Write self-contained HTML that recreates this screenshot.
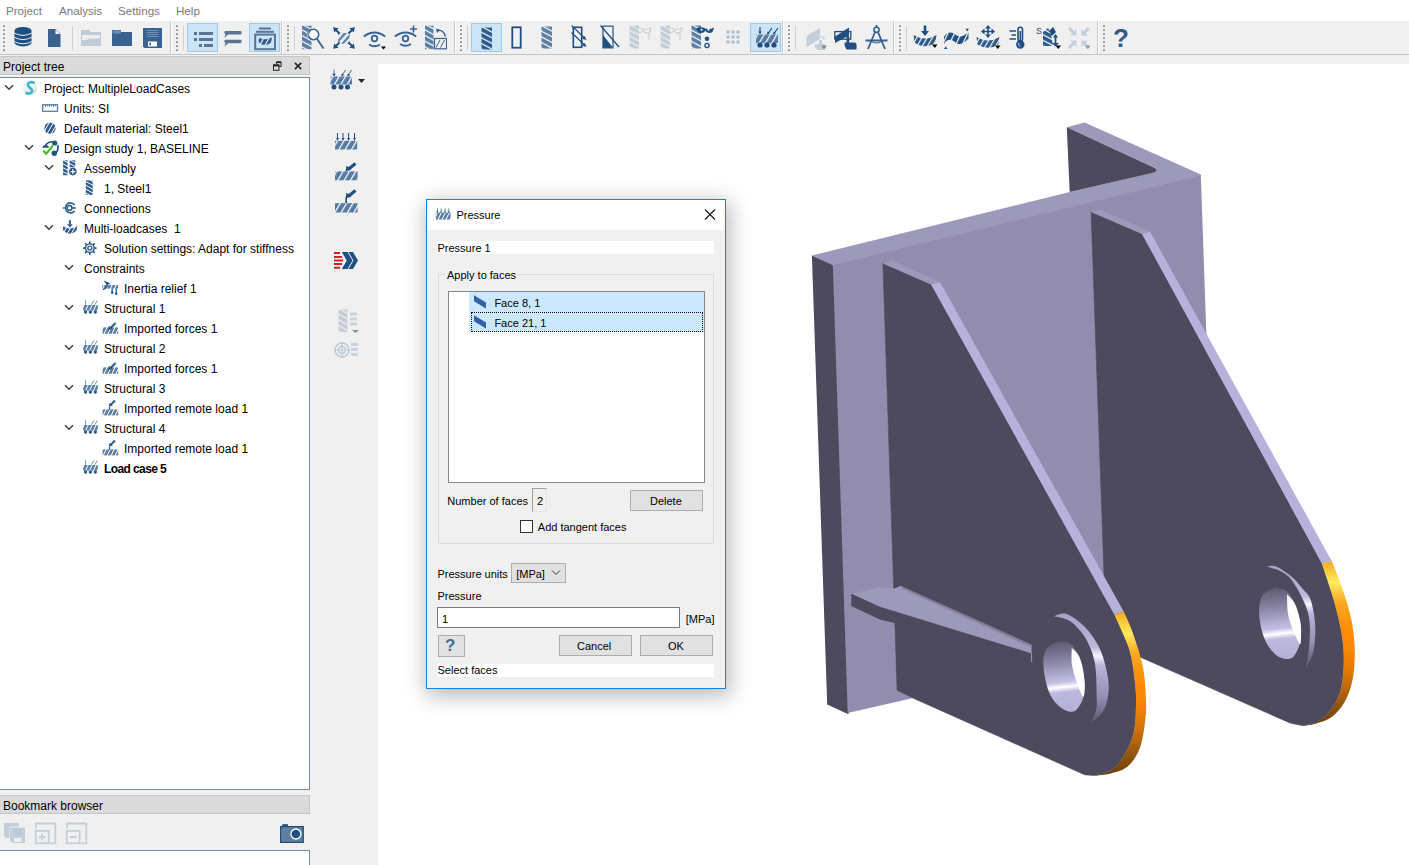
<!DOCTYPE html>
<html><head><meta charset="utf-8">
<style>
*{margin:0;padding:0;box-sizing:border-box}
html,body{width:1409px;height:865px;overflow:hidden;background:#f0f0f0;font-family:"Liberation Sans",sans-serif;font-size:12px;color:#000}
.a{position:absolute}
.t{position:absolute;white-space:nowrap;line-height:14px}
#menu{left:0;top:0;width:1409px;height:21px;background:#fff}
#menu .t{top:4px;color:#7a7a7a;font-size:11.6px}
#tb{left:0;top:21px;width:1409px;height:34px;background:#f0f0f0;border-bottom:1px solid #c6c6c6}
.grip{position:absolute;top:4px;width:3px;height:26px;background:repeating-linear-gradient(to bottom,#9a9a9a 0 1px,transparent 1px 4px)}
.sep{position:absolute;top:5px;width:1px;height:24px;background:#cfcfcf}
.tbend{position:absolute;top:0;width:2px;height:33px;border-left:1px solid #c9c9c9;border-right:1px solid #fff}
.chk{position:absolute;top:2px;width:31px;height:29px;background:#cce4f7;border:1px solid #99d1ff}
.dockhdr{position:absolute;left:0;width:310px;height:19px;background:#dadada;border:1px solid #c6c6c6;border-left:none}
.tree{position:absolute;left:0;width:310px;background:#fff;border:1px solid #7a8699;border-left:none}
.row{position:absolute;height:20px;line-height:20px;white-space:nowrap}
.chev{position:absolute;width:7px;height:7px;border-right:1.6px solid #404040;border-bottom:1.6px solid #404040;transform:rotate(45deg)}
#vp{left:378px;top:64px;width:1031px;height:801px;background:#fff}
.dlg{position:absolute;left:426px;top:199px;width:300px;height:490px;background:#f0f0f0;border:1px solid #1883d7;box-shadow:0 0 10px rgba(0,0,0,0.25)}
.btn{position:absolute;background:#e1e1e1;border:1px solid #adadad;text-align:center;line-height:18px}
</style></head><body>
<svg width="0" height="0" style="position:absolute">
<defs>
<pattern id="st" width="5" height="5" patternUnits="userSpaceOnUse" patternTransform="rotate(-62)"><rect width="5" height="5" fill="#2d5b8d"/><rect width="1.2" height="5" fill="#fff"/></pattern>
<pattern id="st2" width="4.5" height="4.5" patternUnits="userSpaceOnUse" patternTransform="rotate(30)"><rect width="4.5" height="4.5" fill="#2d5b8d"/><rect width="1.1" height="4.5" fill="#fff"/></pattern>
<pattern id="stl" width="5" height="5" patternUnits="userSpaceOnUse" patternTransform="rotate(-62)"><rect width="5" height="5" fill="#5c7ea4"/><rect width="1.2" height="5" fill="#fff"/></pattern>
<pattern id="stl2" width="5.5" height="5.5" patternUnits="userSpaceOnUse" patternTransform="rotate(30)"><rect width="5.5" height="5.5" fill="#587ba3"/><rect width="1.2" height="5.5" fill="#fff"/></pattern>
<pattern id="stl3" width="3.6" height="3.6" patternUnits="userSpaceOnUse" patternTransform="rotate(25)"><rect width="3.6" height="3.6" fill="#587ba3"/><rect width="1" height="3.6" fill="#fff"/></pattern>
<pattern id="st3" width="3.4" height="3.4" patternUnits="userSpaceOnUse" patternTransform="rotate(-62)"><rect width="3.4" height="3.4" fill="#2d5b8d"/><rect width="0.9" height="3.4" fill="#fff"/></pattern>
<pattern id="st4" width="3.6" height="3.6" patternUnits="userSpaceOnUse" patternTransform="rotate(30)"><rect width="3.6" height="3.6" fill="#2d5b8d"/><rect width="0.9" height="3.6" fill="#fff"/></pattern>
<pattern id="st5" width="6" height="6" patternUnits="userSpaceOnUse" patternTransform="rotate(25)"><rect width="6" height="6" fill="#1f4e80"/><rect width="1.2" height="6" fill="#fff"/></pattern>
<pattern id="stg" width="5" height="5" patternUnits="userSpaceOnUse" patternTransform="rotate(-62)"><rect width="5" height="5" fill="#c3ccd6"/><rect width="1.2" height="5" fill="#f0f0f0"/></pattern>
<radialGradient id="sball" cx="0.4" cy="0.35" r="0.7"><stop offset="0" stop-color="#ffffff"/><stop offset="0.7" stop-color="#e8ecef"/><stop offset="1" stop-color="#c7cfd4"/></radialGradient>
<symbol id="i-S" viewBox="0 0 18 16"><circle cx="7" cy="8" r="7" fill="url(#sball)"/><path d="M10.8 2.6 C7.5 1.2 4 3 5 5.6 C6 8 9.4 8.2 9 11 C8.6 13.4 5.6 14 3.6 13.2" fill="none" stroke="#38b4cc" stroke-width="2.6" stroke-linecap="round"/></symbol>
<symbol id="i-ruler" viewBox="0 0 18 16"><rect x="0.7" y="4.7" width="14.8" height="6.6" fill="none" stroke="#5a80a8" stroke-width="1.3"/><path d="M3.5 5v2M5.5 5v1.4M7.5 5v2M9.5 5v1.4M11.5 5v2M13.5 5v1.4" stroke="#5a80a8" stroke-width="1"/></symbol>
<symbol id="i-mat" viewBox="0 0 18 16"><circle cx="8" cy="8.2" r="5.6" fill="url(#st4)"/></symbol>
<symbol id="i-design" viewBox="0 0 18 16"><path d="M3.5 5.5 C5 2.5 9 1 13 2.2 M15.8 5 C16.5 8 16 11 13.5 13.5" fill="none" stroke="#245487" stroke-width="1.7"/><circle cx="12.7" cy="3" r="2.6" fill="#245487"/><circle cx="12.3" cy="13.2" r="2.7" fill="#245487"/><path d="M0.3 7.8 A3.4 3.4 0 0 1 7 7.8Z" fill="#245487"/><path d="M0.5 11.2 L1.8 9.8 L4.2 12 L10.5 4.2 L11.2 7 L4.2 15.6Z" fill="#40c126"/></symbol>
<symbol id="i-asm" viewBox="0 0 18 16"><rect x="1" y="0.3" width="4.6" height="15" fill="url(#st3)"/><rect x="7.6" y="0.3" width="5.6" height="7" fill="url(#st3)"/><circle cx="10.8" cy="11.6" r="3.8" fill="#2d5b8d"/><path d="M10.8 9.2v4.8M8.4 11.6h4.8" stroke="#fff" stroke-width="1.2"/></symbol>
<symbol id="i-part" viewBox="0 0 18 16"><rect x="3.8" y="0.3" width="6.9" height="14.6" fill="url(#st3)"/></symbol>
<symbol id="i-conn" viewBox="0 0 18 16"><path d="M12.6 5 A5 5 0 1 0 12.6 10.8" fill="none" stroke="#2d5b8d" stroke-width="1.6"/><circle cx="7.6" cy="7.9" r="2.4" fill="none" stroke="#2d5b8d" stroke-width="1.5"/><path d="M0.8 7.9H2.8M9.8 7.9H14" stroke="#2d5b8d" stroke-width="1.5"/></symbol>
<symbol id="i-multi" viewBox="0 0 18 16"><path d="M0.8 6 Q7.9 11 15 6 L14.6 10.5 Q7.9 17 1.2 10.5Z" fill="url(#st4)"/><path d="M7.9 0.2v4.5" stroke="#2d5b8d" stroke-width="2"/><path d="M5 4.2 L7.9 7.6 L10.8 4.2Z" fill="#2d5b8d"/></symbol>
<symbol id="i-gear" viewBox="0 0 18 16"><path d="M6.86,3.20 L7.23,1.23 L8.47,1.23 L8.84,3.20 L10.61,3.93 L12.27,2.80 L13.15,3.68 L12.02,5.34 L12.75,7.11 L14.72,7.48 L14.72,8.72 L12.75,9.09 L12.02,10.86 L13.15,12.52 L12.27,13.40 L10.61,12.27 L8.84,13.00 L8.47,14.97 L7.23,14.97 L6.86,13.00 L5.09,12.27 L3.43,13.40 L2.55,12.52 L3.68,10.86 L2.95,9.09 L0.98,8.72 L0.98,7.48 L2.95,7.11 L3.68,5.34 L2.55,3.68 L3.43,2.80 L5.09,3.93Z" fill="#2d5b8d"/><circle cx="7.85" cy="8.1" r="3.6" fill="#fff"/><circle cx="7.85" cy="8.1" r="2.7" fill="#2d5b8d"/><circle cx="7.85" cy="8.1" r="1.4" fill="#fff"/></symbol>
<symbol id="i-inertia" viewBox="0 0 18 16"><path d="M0.3 5h15.7v3.6h-15.7z" fill="url(#stl3)"/><path d="M0.8 9.6 Q5.5 8.2 5.8 3.2" fill="none" stroke="#2d5b8d" stroke-width="1.4"/><path d="M1.6 0.4 L8.6 3.4 L4.6 4.8Z" fill="#1f4e80"/><path d="M10.2 8.4v3.6M14.2 8.4v4.6" stroke="#2d5b8d" stroke-width="1.3"/><ellipse cx="10.2" cy="12.4" rx="1.2" ry="1.7" fill="#2d5b8d"/><ellipse cx="14.2" cy="13.6" rx="1.2" ry="1.7" fill="#2d5b8d"/></symbol>
<symbol id="i-struct" viewBox="0 0 18 16"><path d="M1.2 5h14.6v5.6h-14.6z" fill="url(#stl3)"/><circle cx="3.5" cy="12" r="1.7" fill="#2d5b8d"/><circle cx="8.4" cy="12" r="1.7" fill="#2d5b8d"/><circle cx="13.3" cy="12" r="1.7" fill="#2d5b8d"/><path d="M3.5 0.2v4.6M9.5 4.6 L12 0.3M13 4.6 L15.4 0.3" stroke="#7995b4" stroke-width="1"/></symbol>
<symbol id="i-impf" viewBox="0 0 18 16"><path d="M0.6 7.4h15.6v6.4h-15.6z" fill="url(#stl3)"/><path d="M7.5 9 L13.6 3" stroke="#2d5b8d" stroke-width="2"/><path d="M6.2 10.2 L7 5.8 L10.5 8.6Z" fill="#2d5b8d"/></symbol>
<symbol id="i-remote" viewBox="0 0 18 16"><path d="M0.6 9.4h15.6v6h-15.6z" fill="url(#stl3)"/><path d="M8.5 5 L13 0.5" stroke="#2d5b8d" stroke-width="2"/><path d="M6.8 6.8 L7.4 2.8 L10.8 5.6Z" fill="#2d5b8d"/><path d="M7.6 6.8v3" stroke="#2d5b8d" stroke-width="1.2"/></symbol>
<symbol id="i-press" viewBox="0 0 17 13"><path d="M0.8 4.6h14.8v7h-14.8z" fill="url(#stl3)"/><path d="M2.4 0.5v4M6.2 0.5v4M10 0.5v4M13.8 0.5v4" stroke="#5a7ca2" stroke-width="1"/><path d="M1.2 3.6h2.4l-1.2 1.6zM5 3.6h2.4l-1.2 1.6zM8.8 3.6h2.4l-1.2 1.6zM12.6 3.6h2.4l-1.2 1.6z" fill="#3f6690"/></symbol>
</defs></svg>

<div id="menu" class="a">
 <span class="t" style="left:6px">Project</span>
 <span class="t" style="left:59px">Analysis</span>
 <span class="t" style="left:118px">Settings</span>
 <span class="t" style="left:176px">Help</span>
</div>
<!--TB-->
<div class="a" style="left:0;top:21px;width:1409px;height:33px;background:#f0f0f0"></div>
<div class="a" style="left:0;top:54px;width:1409px;height:1px;background:#c4c4c4"></div>
<div class="a" style="left:3px;top:25px;width:2px;height:26px;background:repeating-linear-gradient(to bottom,#b8b8b8 0 1px,#8c8c8c 1px 2px,transparent 2px 4px)"></div>
<svg class="a" style="left:14px;top:27px" width="18" height="20" viewBox="0 0 18 20"><path d="M0.5 3.6 A8.5 3.6 0 0 1 17.5 3.6 V15.6 A8.5 3.8 0 0 1 0.5 15.6Z" fill="#1f4e80"/><path d="M0.5 6.2 Q9 10.6 17.5 6.2 M0.5 10.4 Q9 14.8 17.5 10.4 M0.5 14.6 Q9 19 17.5 14.6" fill="none" stroke="#fff" stroke-width="0.9"/></svg>
<svg class="a" style="left:48px;top:29px" width="13" height="18" viewBox="0 0 13 18"><path d="M0 0 H7.5 L12.5 5 V18 H0Z" fill="#386290"/><path d="M7.5 0.5 L12 5 H7.5Z" fill="#fff"/></svg>
<div class="a" style="left:72px;top:26px;width:1px;height:24px;background:#d0d0d0"></div>
<svg class="a" style="left:81px;top:30px" width="20" height="16" viewBox="0 0 20 16"><path d="M0 0 H9 V2 H20 V16 H0Z" fill="#c3ccd6"/><path d="M1 5 H19 V8.5 H8 L6 10 H1Z" fill="#eef0f3"/></svg>
<svg class="a" style="left:112px;top:30px" width="20" height="16" viewBox="0 0 20 16"><path d="M0 0 H9 V2 H20 V16 H0Z" fill="#386290"/><path d="M0.5 0.5 H9 V3.5 H0.5Z" fill="#6f8eb0"/></svg>
<svg class="a" style="left:143px;top:28px" width="19" height="20" viewBox="0 0 19 20"><path d="M0 0 H19 V20 H1.5 L0 18.5Z" fill="#386290"/><path d="M3.5 2.5H15.5M3.5 4.5H15.5M3.5 6.5H15.5M3.5 8.5H15.5" stroke="#7c98b8" stroke-width="0.9"/><rect x="5" y="13.5" width="9" height="5" fill="#fff"/><rect x="6.4" y="14.6" width="1.6" height="2.8" fill="#386290"/></svg>
<div class="a" style="left:170px;top:21px;width:1px;height:33px;background:#c8c8c8"></div><div class="a" style="left:171px;top:21px;width:1px;height:33px;background:#fff"></div>
<div class="a" style="left:176px;top:25px;width:2px;height:26px;background:repeating-linear-gradient(to bottom,#b8b8b8 0 1px,#8c8c8c 1px 2px,transparent 2px 4px)"></div>
<div class="a" style="left:183px;top:26px;width:1px;height:24px;background:#d0d0d0"></div>
<div class="a" style="left:187px;top:23px;width:31px;height:29px;background:#cce4f7;border:1px solid #99ccf5"></div>
<svg class="a" style="left:194px;top:32px" width="20" height="16" viewBox="0 0 20 16"><g fill="#5a7593"><rect x="0" y="0" width="3" height="3"/><rect x="5" y="0" width="14" height="3"/><rect x="0" y="6" width="3" height="3"/><rect x="5" y="6" width="14" height="3"/><rect x="5" y="12" width="3" height="3"/><rect x="10" y="12" width="9" height="3"/></g></svg>
<svg class="a" style="left:223px;top:30px" width="20" height="18" viewBox="0 0 20 18"><g fill="#5a7593"><path d="M2 1 H17.5 Q18.5 1 18.5 2 V3.5 Q18.5 4.5 17.5 4.5 H5 L1.5 8 L2.5 4 Q1.2 3.5 1.2 2.5Z"/><path d="M2 9.8 H17.5 Q18.5 9.8 18.5 10.8 V12.3 Q18.5 13.3 17.5 13.3 H5 L1.5 16.8 L2.5 12.8 Q1.2 12.3 1.2 11.3Z"/></g></svg>
<div class="a" style="left:249px;top:23px;width:31px;height:29px;background:#cce4f7;border:1px solid #99ccf5"></div>
<svg class="a" style="left:254px;top:27px" width="23" height="24" viewBox="0 0 23 24"><rect x="5" y="0.5" width="12" height="2" fill="#5a7593"/><rect x="2" y="3.8" width="18" height="2" fill="#5a7593"/><rect x="1.2" y="7.6" width="19.8" height="14.6" fill="none" stroke="#5a7593" stroke-width="2"/><path d="M4 10.5 Q11 14 18 10.5 L17 15.5 Q11 20.5 5 15.5Z" fill="url(#st2)"/></svg>
<div class="a" style="left:281px;top:21px;width:1px;height:33px;background:#c8c8c8"></div><div class="a" style="left:282px;top:21px;width:1px;height:33px;background:#fff"></div>
<div class="a" style="left:287px;top:25px;width:2px;height:26px;background:repeating-linear-gradient(to bottom,#b8b8b8 0 1px,#8c8c8c 1px 2px,transparent 2px 4px)"></div>
<div class="a" style="left:294px;top:26px;width:1px;height:24px;background:#d0d0d0"></div>
<svg class="a" style="left:302px;top:25px" width="23" height="25" viewBox="0 0 23 25"><rect x="0" y="0.7" width="9.5" height="23.5" fill="url(#stl)"/><circle cx="11.5" cy="9.5" r="5.2" fill="#fff" stroke="#386290" stroke-width="1.6"/><path d="M14.8 13.5 L21.5 23.5" stroke="#386290" stroke-width="1.8"/><path d="M6.5 5.5 A5.2 5.2 0 0 0 6.5 13.5" fill="#9bb0c6"/></svg>
<svg class="a" style="left:333px;top:27px" width="22" height="22" viewBox="0 0 22 22"><path d="M10.6 6.1 H14.1 L5.1 16.1 V12.8Z M16.7 7.1 V10.6 L10.9 16.7 H8Z" fill="#6283a8"/><path d="M5.1 6.1 H7.7 L5.1 8.6Z M16.8 13.8 V16.7 H14.2Z" fill="#6283a8"/><path d="M2.5 2.5 L6.6 6.6 M19.5 2.5 L15.4 6.6 M2.5 19.5 L6.6 15.4 M19.5 19.5 L15.4 15.4" stroke="#1f4e80" stroke-width="2"/><path d="M0.2 0.2 L5.6 1.2 L1.2 5.6Z M21.8 0.2 L16.4 1.2 L20.8 5.6Z M0.2 21.8 L5.6 20.8 L1.2 16.4Z M21.8 21.8 L16.4 20.8 L20.8 16.4Z" fill="#1f4e80"/></svg>
<svg class="a" style="left:363px;top:31px" width="24" height="19" viewBox="0 0 24 19"><path d="M0.8 5.5 Q11.5 -2.5 22.2 5.5" fill="none" stroke="#386290" stroke-width="1.8"/><circle cx="11.5" cy="7.5" r="2.8" fill="none" stroke="#386290" stroke-width="1.8"/><path d="M6 13.5 Q11.5 17 17 13.5" fill="none" stroke="#386290" stroke-width="1.8"/><path d="M18 15.5 H23 L20.5 18.5Z" fill="#000"/></svg>
<svg class="a" style="left:394px;top:25px" width="24" height="22" viewBox="0 0 24 22"><path d="M0.8 11.5 Q11.5 3.5 22.2 11.5" fill="none" stroke="#386290" stroke-width="1.8"/><circle cx="11.5" cy="13.5" r="2.8" fill="none" stroke="#386290" stroke-width="1.8"/><path d="M6 19 Q11.5 22.5 17 19" fill="none" stroke="#386290" stroke-width="1.8"/><path d="M19.5 0.5 V7.5 M16 4 H23" stroke="#386290" stroke-width="1.6"/></svg>
<svg class="a" style="left:425px;top:25px" width="22" height="25" viewBox="0 0 22 25"><rect x="0" y="0.7" width="8.5" height="23.5" fill="url(#stl)"/><rect x="9.5" y="13.5" width="12" height="10.3" fill="none" stroke="#386290" stroke-width="1.2"/><path d="M11 22.5 L15 15 M15.5 22.5 L19.5 15" stroke="#386290" stroke-width="1"/><path d="M12 6 Q18 3.5 20.5 11.5" fill="none" stroke="#386290" stroke-width="1.4"/><path d="M11 3.5 L15 4.8 L12 8Z" fill="#386290"/></svg>
<div class="a" style="left:454px;top:21px;width:1px;height:33px;background:#c8c8c8"></div><div class="a" style="left:455px;top:21px;width:1px;height:33px;background:#fff"></div>
<div class="a" style="left:460px;top:25px;width:2px;height:26px;background:repeating-linear-gradient(to bottom,#b8b8b8 0 1px,#8c8c8c 1px 2px,transparent 2px 4px)"></div>
<div class="a" style="left:467px;top:26px;width:1px;height:24px;background:#d0d0d0"></div>
<div class="a" style="left:471px;top:23px;width:31px;height:29px;background:#cce4f7;border:1px solid #99ccf5"></div>
<svg class="a" style="left:481px;top:27px" width="12" height="23" viewBox="0 0 12 23"><rect x="0.5" y="0.5" width="10.5" height="22" fill="url(#st)"/></svg>
<svg class="a" style="left:511px;top:26px" width="12" height="23" viewBox="0 0 12 23"><rect x="1.3" y="1.3" width="8.4" height="20.4" fill="none" stroke="#1f4e80" stroke-width="1.8"/></svg>
<svg class="a" style="left:541px;top:26px" width="12" height="23" viewBox="0 0 12 23"><rect x="0.5" y="0.5" width="10.5" height="22" fill="url(#stl)"/></svg>
<svg class="a" style="left:571px;top:25px" width="17" height="24" viewBox="0 0 17 24"><rect x="2.3" y="2.3" width="8.4" height="20" fill="none" stroke="#1f4e80" stroke-width="1.6"/><path d="M0.5 0.5 L14 13.5 M0.5 7.5 L14 20.5" stroke="#1f4e80" stroke-width="1.1"/><path d="M15.5 15 L11 13.8 L13.8 11Z M15.5 22 L11 20.8 L13.8 18Z" fill="#1f4e80"/></svg>
<svg class="a" style="left:600px;top:25px" width="20" height="24" viewBox="0 0 20 24"><rect x="3" y="1.2" width="10" height="21.6" fill="none" stroke="#557a9f" stroke-width="1.6"/><path d="M3 10 L13 22.8 H3Z" fill="#1f4e80"/><path d="M0.5 0.5 L19 22" stroke="#1f4e80" stroke-width="1.3"/></svg>
<svg class="a" style="left:629px;top:25px" width="23" height="24" viewBox="0 0 23 24"><rect x="0.5" y="0.5" width="9.5" height="23" fill="url(#stg)"/><path d="M5 4 Q8 1.5 14 4 Q18 5 22 3 Q21 8.5 17.5 8 Q15 7.5 14 5.5 Q12 8 9 7.5 Q6 7 5 4Z" fill="none" stroke="#c4ced9" stroke-width="1.2"/><path d="M20 7.5 V15" stroke="#c4ced9" stroke-width="1"/></svg>
<svg class="a" style="left:660px;top:25px" width="23" height="24" viewBox="0 0 23 24"><rect x="0.5" y="0.5" width="9.5" height="23" fill="url(#stg)"/><path d="M5 4 Q8 1.5 14 4 Q18 5 22 3 Q21 8.5 17.5 8 Q15 7.5 14 5.5 Q12 8 9 7.5 Q6 7 5 4Z" fill="none" stroke="#c4ced9" stroke-width="1.2"/><path d="M20 7.5 V15" stroke="#c4ced9" stroke-width="1"/></svg>
<svg class="a" style="left:691px;top:25px" width="24" height="24" viewBox="0 0 24 24"><rect x="0.5" y="0.5" width="9.5" height="23" fill="url(#stl)"/><path d="M5.5 3.5 Q9 1.2 14.5 3.5 Q19 5 23 2.5 Q22 8.5 18 8 Q15.5 7.5 14.5 5.8 Q12.5 8.5 9.5 8 Q6 7.5 5.5 3.5Z" fill="#1f4e80"/><circle cx="10.5" cy="4.8" r="1" fill="#fff"/><circle cx="17.5" cy="4.8" r="1" fill="#fff"/><circle cx="16" cy="13.8" r="2.3" fill="#1f4e80"/><circle cx="16" cy="20.5" r="2.1" fill="none" stroke="#1f4e80" stroke-width="1.3"/></svg>
<svg class="a" style="left:726px;top:30px" width="15" height="15" viewBox="0 0 15 15"><g fill="#aabcd0"><rect x="0.5" y="0.5" width="3" height="3"/><rect x="5.5" y="0.5" width="3" height="3"/><rect x="10.5" y="0.5" width="3" height="3"/><rect x="0.5" y="5.5" width="3" height="3"/><rect x="5.5" y="5.5" width="3" height="3"/><rect x="10.5" y="5.5" width="3" height="3"/><rect x="0.5" y="10.5" width="3" height="3"/><rect x="5.5" y="10.5" width="3" height="3"/><rect x="10.5" y="10.5" width="3" height="3"/></g></svg>
<div class="a" style="left:750px;top:23px;width:31px;height:29px;background:#cce4f7;border:1px solid #99ccf5"></div>
<svg class="a" style="left:755px;top:27px" width="24" height="21" viewBox="0 0 24 21"><path d="M1 7.5 H23 V16 H1Z" fill="url(#stl2)"/><circle cx="5" cy="18" r="2.6" fill="#1f4e80"/><circle cx="12" cy="18" r="2.6" fill="#1f4e80"/><circle cx="19" cy="18" r="2.6" fill="#1f4e80"/><path d="M5 0 V6" stroke="#1f4e80" stroke-width="1.2"/><path d="M3.2 4.5 H6.8 L5 7.3Z" fill="#1f4e80"/><path d="M17 1 L13 6.5M23 1 L19 6.5" stroke="#1f4e80" stroke-width="1.2"/><path d="M12 7.5 L12.5 4.5 L15 6Z M18 7.5 L18.5 4.5 L21 6Z" fill="#1f4e80"/></svg>
<div class="a" style="left:782px;top:21px;width:1px;height:33px;background:#c8c8c8"></div><div class="a" style="left:783px;top:21px;width:1px;height:33px;background:#fff"></div>
<div class="a" style="left:788px;top:25px;width:2px;height:26px;background:repeating-linear-gradient(to bottom,#b8b8b8 0 1px,#8c8c8c 1px 2px,transparent 2px 4px)"></div>
<div class="a" style="left:795px;top:26px;width:1px;height:24px;background:#d0d0d0"></div>
<svg class="a" style="left:806px;top:27px" width="22" height="24" viewBox="0 0 22 24"><path d="M0.5 9 L14 1 V12 L0.5 20Z" fill="#c3cfdb"/><path d="M12 13 Q12 9.5 15 9.5 Q18 9.5 18 13" fill="none" stroke="#c3cfdb" stroke-width="1.2"/><path d="M13 13 V17 H9 Q8 21 12 23 H19 V17 H16 V13Z" fill="#c3cfdb"/><path d="M15 18.5 H21 L18 22.5Z" fill="#8a8a8a"/></svg>
<svg class="a" style="left:834px;top:27px" width="24" height="23" viewBox="0 0 24 23"><path d="M1 9.5 L15 0.5 V8.5 L1 16Z" fill="#1f4e80"/><rect x="0.8" y="4.6" width="16" height="7.6" fill="none" stroke="#1f4e80" stroke-width="1.3"/><path d="M12.5 9 V15.5 H10.5 Q10 19.5 12.5 22.5 H22.5 V17.5 Q22.5 15.5 20.5 15.5 H15.2 V9Z" fill="#1f4e80"/></svg>
<svg class="a" style="left:865px;top:25px" width="23" height="25" viewBox="0 0 23 25"><circle cx="11.5" cy="4.8" r="2.6" fill="none" stroke="#386290" stroke-width="1.6"/><path d="M11.5 0 V2 M10 7 L3 24 M13 7 L20 24 M0.5 15.5 H22.5" stroke="#386290" stroke-width="1.8"/><path d="M6 16 Q11.5 20 17 16" fill="none" stroke="#386290" stroke-width="1.2"/></svg>
<div class="a" style="left:893px;top:21px;width:1px;height:33px;background:#c8c8c8"></div><div class="a" style="left:894px;top:21px;width:1px;height:33px;background:#fff"></div>
<div class="a" style="left:899px;top:25px;width:2px;height:26px;background:repeating-linear-gradient(to bottom,#b8b8b8 0 1px,#8c8c8c 1px 2px,transparent 2px 4px)"></div>
<div class="a" style="left:906px;top:26px;width:1px;height:24px;background:#d0d0d0"></div>
<svg class="a" style="left:913px;top:25px" width="25" height="25" viewBox="0 0 25 25"><path d="M0.5 10 Q12 17 23.5 10 L22.5 17.5 Q12 25 1.5 17.5Z" fill="url(#st2)"/><path d="M12 0.5 V7" stroke="#1f4e80" stroke-width="2.6"/><path d="M8 6 H16 L12 11Z" fill="#1f4e80"/><path d="M19 19.5 H24.5 L21.8 23Z" fill="#000"/></svg>
<svg class="a" style="left:943px;top:28px" width="27" height="23" viewBox="0 0 27 23"><path d="M1 9 C4 4 8 3 13 7 C16 9.5 20 9 25.5 4 V10.5 C20 16 16 17.5 12.5 14.5 C8 10.5 4 11 1 16Z" fill="url(#st5)"/><path d="M22.5 0.8 H26 L24.2 3.5Z M1 21 H4.5 L2.8 18.2Z" fill="#1f4e80"/></svg>
<svg class="a" style="left:976px;top:25px" width="25" height="25" viewBox="0 0 25 25"><path d="M0.5 12 Q12 19 23.5 12 L22.5 19.5 Q12 26 1.5 19.5Z" fill="url(#st2)"/><path d="M12 2.5 V10.5 M7 6.5 H17" stroke="#1f4e80" stroke-width="1.6"/><path d="M12 0 L9 3.5 H15Z M12 13 L9 9.5 H15Z M5 6.5 L8.5 3.5 V9.5Z M19 6.5 L15.5 3.5 V9.5Z" fill="#1f4e80"/><path d="M19 20.5 H24.5 L21.8 24Z" fill="#000"/></svg>
<svg class="a" style="left:1009px;top:26px" width="19" height="23" viewBox="0 0 19 23"><path d="M0.5 5 H7 M2.5 9 H7 M0.5 13 H7" stroke="#1f4e80" stroke-width="1.6"/><rect x="9" y="1.2" width="4.5" height="14" rx="2.2" fill="none" stroke="#1f4e80" stroke-width="1.6"/><path d="M11.3 5 V15" stroke="#1f4e80" stroke-width="1.6"/><circle cx="11.3" cy="18.5" r="4.2" fill="#1f4e80"/><path d="M9.5 17 Q9 19.8 11.5 20.5" fill="none" stroke="#fff" stroke-width="0.7"/></svg>
<svg class="a" style="left:1036px;top:26px" width="25" height="23" viewBox="0 0 25 23"><text x="0" y="8" font-family="Liberation Sans" font-size="9" fill="#1f4e80">S</text><path d="M7 6 L12 2 L15 8 L17 20 H7Z" fill="url(#st)"/><path d="M13 5 L17 1 L20 6 L16 10Z" fill="#1f4e80"/><path d="M19.5 9 V19" stroke="#1f4e80" stroke-width="1.8"/><path d="M17 11.5 L19.5 8 L22 11.5Z M16 17 L19.5 20.5 L23 17Z" fill="#1f4e80"/><path d="M19.5 19.5 H25 L22.3 23Z" fill="#000"/></svg>
<svg class="a" style="left:1067px;top:26px" width="25" height="24" viewBox="0 0 25 24"><g fill="#c3cfdb"><path d="M2 2 L8 8 M22 2 L16 8 M2 22 L8 16 M22 22 L16 16" stroke="#c3cfdb" stroke-width="3"/><path d="M9.5 9.5 H3 L9.5 3Z M14.5 9.5 H21 L14.5 3Z M9.5 14.5 H3 L9.5 21Z M14.5 14.5 H21 L14.5 21Z"/></g><path d="M18 19.5 H23.5 L20.8 23Z" fill="#9a9a9a"/></svg>
<div class="a" style="left:1097px;top:21px;width:1px;height:33px;background:#c8c8c8"></div><div class="a" style="left:1098px;top:21px;width:1px;height:33px;background:#fff"></div>
<div class="a" style="left:1103px;top:25px;width:2px;height:26px;background:repeating-linear-gradient(to bottom,#b8b8b8 0 1px,#8c8c8c 1px 2px,transparent 2px 4px)"></div>
<span class="t" style="left:1113px;top:24px;font-size:26px;line-height:28px;font-weight:bold;color:#2d5b8d">?</span>
<!--/TB-->

<!-- project tree dock -->
<div class="dockhdr" style="top:56px"><span class="t" style="left:3px;top:3px">Project tree</span></div>
<div class="tree" style="top:77px;height:713px" id="tree"></div>
<!--DOCKBTN--><svg class="a" style="left:273px;top:61px" width="9" height="10"><path d="M3.5 3V0.9H8.1V5.5H6" fill="none" stroke="#222" stroke-width="1"/><path d="M3.5 1.3H8.1" stroke="#222" stroke-width="1.6"/><rect x="0.5" y="3.8" width="5.5" height="5.5" fill="none" stroke="#222" stroke-width="1"/><path d="M0.5 4.6H6" stroke="#222" stroke-width="1.6"/></svg><svg class="a" style="left:294px;top:62px" width="9" height="9"><path d="M0.9 0.9L7.2 7.2M7.2 0.9L0.9 7.2" stroke="#2a2a2a" stroke-width="1.7"/></svg><svg class="a" style="left:273px;top:800px" width="9" height="10"><path d="M3.5 3V0.9H8.1V5.5H6" fill="none" stroke="#222" stroke-width="1"/><path d="M3.5 1.3H8.1" stroke="#222" stroke-width="1.6"/><rect x="0.5" y="3.8" width="5.5" height="5.5" fill="none" stroke="#222" stroke-width="1"/><path d="M0.5 4.6H6" stroke="#222" stroke-width="1.6"/></svg><svg class="a" style="left:294px;top:801px" width="9" height="9"><path d="M0.9 0.9L7.2 7.2M7.2 0.9L0.9 7.2" stroke="#2a2a2a" stroke-width="1.7"/></svg><!--/DOCKBTN-->
<!--TREE-->
<svg class="a" style="left:4px;top:84px" width="10" height="7"><path d="M1 1.2 L5 5.2 L9 1.2" fill="none" stroke="#404040" stroke-width="1.5"/></svg>
<svg class="a" style="left:23px;top:80px" width="18" height="16"><use href="#i-S"/></svg>
<span class="t" style="left:44px;top:82px">Project: MultipleLoadCases</span>
<svg class="a" style="left:42px;top:100px" width="18" height="16"><use href="#i-ruler"/></svg>
<span class="t" style="left:64px;top:102px">Units: SI</span>
<svg class="a" style="left:42px;top:120px" width="18" height="16"><use href="#i-mat"/></svg>
<span class="t" style="left:64px;top:122px">Default material: Steel1</span>
<svg class="a" style="left:24px;top:144px" width="10" height="7"><path d="M1 1.2 L5 5.2 L9 1.2" fill="none" stroke="#404040" stroke-width="1.5"/></svg>
<svg class="a" style="left:42px;top:140px" width="18" height="16"><use href="#i-design"/></svg>
<span class="t" style="left:64px;top:142px">Design study 1, BASELINE</span>
<svg class="a" style="left:44px;top:164px" width="10" height="7"><path d="M1 1.2 L5 5.2 L9 1.2" fill="none" stroke="#404040" stroke-width="1.5"/></svg>
<svg class="a" style="left:62px;top:160px" width="18" height="16"><use href="#i-asm"/></svg>
<span class="t" style="left:84px;top:162px">Assembly</span>
<svg class="a" style="left:82px;top:180px" width="18" height="16"><use href="#i-part"/></svg>
<span class="t" style="left:104px;top:182px">1, Steel1</span>
<svg class="a" style="left:62px;top:200px" width="18" height="16"><use href="#i-conn"/></svg>
<span class="t" style="left:84px;top:202px">Connections</span>
<svg class="a" style="left:44px;top:224px" width="10" height="7"><path d="M1 1.2 L5 5.2 L9 1.2" fill="none" stroke="#404040" stroke-width="1.5"/></svg>
<svg class="a" style="left:62px;top:220px" width="18" height="16"><use href="#i-multi"/></svg>
<span class="t" style="left:84px;top:222px">Multi-loadcases&nbsp; 1</span>
<svg class="a" style="left:82px;top:240px" width="18" height="16"><use href="#i-gear"/></svg>
<span class="t" style="left:104px;top:242px">Solution settings: Adapt for stiffness</span>
<svg class="a" style="left:64px;top:264px" width="10" height="7"><path d="M1 1.2 L5 5.2 L9 1.2" fill="none" stroke="#404040" stroke-width="1.5"/></svg>
<span class="t" style="left:84px;top:262px">Constraints</span>
<svg class="a" style="left:102px;top:280px" width="18" height="16"><use href="#i-inertia"/></svg>
<span class="t" style="left:124px;top:282px">Inertia relief 1</span>
<svg class="a" style="left:64px;top:304px" width="10" height="7"><path d="M1 1.2 L5 5.2 L9 1.2" fill="none" stroke="#404040" stroke-width="1.5"/></svg>
<svg class="a" style="left:82px;top:300px" width="18" height="16"><use href="#i-struct"/></svg>
<span class="t" style="left:104px;top:302px">Structural 1</span>
<svg class="a" style="left:102px;top:320px" width="18" height="16"><use href="#i-impf"/></svg>
<span class="t" style="left:124px;top:322px">Imported forces 1</span>
<svg class="a" style="left:64px;top:344px" width="10" height="7"><path d="M1 1.2 L5 5.2 L9 1.2" fill="none" stroke="#404040" stroke-width="1.5"/></svg>
<svg class="a" style="left:82px;top:340px" width="18" height="16"><use href="#i-struct"/></svg>
<span class="t" style="left:104px;top:342px">Structural 2</span>
<svg class="a" style="left:102px;top:360px" width="18" height="16"><use href="#i-impf"/></svg>
<span class="t" style="left:124px;top:362px">Imported forces 1</span>
<svg class="a" style="left:64px;top:384px" width="10" height="7"><path d="M1 1.2 L5 5.2 L9 1.2" fill="none" stroke="#404040" stroke-width="1.5"/></svg>
<svg class="a" style="left:82px;top:380px" width="18" height="16"><use href="#i-struct"/></svg>
<span class="t" style="left:104px;top:382px">Structural 3</span>
<svg class="a" style="left:102px;top:400px" width="18" height="16"><use href="#i-remote"/></svg>
<span class="t" style="left:124px;top:402px">Imported remote load 1</span>
<svg class="a" style="left:64px;top:424px" width="10" height="7"><path d="M1 1.2 L5 5.2 L9 1.2" fill="none" stroke="#404040" stroke-width="1.5"/></svg>
<svg class="a" style="left:82px;top:420px" width="18" height="16"><use href="#i-struct"/></svg>
<span class="t" style="left:104px;top:422px">Structural 4</span>
<svg class="a" style="left:102px;top:440px" width="18" height="16"><use href="#i-remote"/></svg>
<span class="t" style="left:124px;top:442px">Imported remote load 1</span>
<svg class="a" style="left:82px;top:460px" width="18" height="16"><use href="#i-struct"/></svg>
<span class="t" style="left:104px;top:462px"><b style="letter-spacing:-0.6px">Load case 5</b></span>
<!--/TREE-->
<div class="dockhdr" style="top:795px"><span class="t" style="left:3px;top:3px">Bookmark browser</span></div>
<div class="tree" style="top:850px;height:20px"></div>

<!--VT-->
<svg class="a" style="left:330px;top:69px" width="37" height="22" viewBox="0 0 37 22"><path d="M0.5 7.5 H22 V15.5 H0.5Z" fill="url(#stl2)"/><circle cx="4" cy="18" r="2.5" fill="#1f4e80"/><circle cx="11" cy="18" r="2.5" fill="#1f4e80"/><circle cx="17.5" cy="18" r="2.5" fill="#1f4e80"/><path d="M4 0.5 V6" stroke="#5f7fa3" stroke-width="1.1"/><path d="M2.3 4.8 H5.7 L4 7.4Z" fill="#1f4e80"/><path d="M15.5 1 L12 6.5M21.5 1 L18 6.5" stroke="#5f7fa3" stroke-width="1.1"/><path d="M11.3 7.4 L11.8 4.5 L14.2 5.9Z M17.3 7.4 L17.8 4.5 L20.2 5.9Z" fill="#1f4e80"/><path d="M28 10 H35 L31.5 14Z" fill="#222"/></svg>
<svg class="a" style="left:335px;top:133px" width="23" height="17" viewBox="0 0 23 17"><path d="M0 7.8 H22.2 V16.5 H0Z" fill="url(#stl2)"/><path d="M2.5 0 V7M8 0 V7M13.6 0 V7M19.5 0 V7" stroke="#1f4e80" stroke-width="1"/><path d="M1 5 H4 L2.5 7.8Z M6.5 5 H9.5 L8 7.8Z M12.1 5 H15.1 L13.6 7.8Z M18 5 H21 L19.5 7.8Z" fill="#1f4e80"/></svg>
<svg class="a" style="left:335px;top:162px" width="23" height="19" viewBox="0 0 23 19"><path d="M0 9.4 H22.6 V18.3 H0Z" fill="url(#stl2)"/><path d="M20.5 1.5 L13 7.5" stroke="#1f4e80" stroke-width="3"/><path d="M10.5 9.3 L11.5 3.8 L16.5 7.6Z" fill="#1f4e80"/></svg>
<svg class="a" style="left:335px;top:189px" width="23" height="24" viewBox="0 0 23 24"><path d="M0 14.2 H22.6 V23.5 H0Z" fill="url(#stl2)"/><path d="M20.5 1.5 L13 7.5" stroke="#1f4e80" stroke-width="3"/><path d="M10.5 9.3 L11.5 3.8 L16.5 7.6Z" fill="#1f4e80"/><path d="M11.2 8.5 V14.2" stroke="#1f4e80" stroke-width="1.6"/></svg>
<svg class="a" style="left:333px;top:251px" width="26" height="19" viewBox="0 0 26 19"><path d="M1 2H7M1 6H9M1 9.5H10M1 13H9M1 16.8H7" stroke="#d0202a" stroke-width="2"/><path d="M8.8 1 H14.5 L19.5 9.5 L14.5 18 H8.8 L13.8 9.5Z M15.5 1 H20 L25 9.5 L20 18 H15.5 L20.5 9.5Z" fill="#1f4e80"/></svg>
<svg class="a" style="left:338px;top:309px" width="22" height="24" viewBox="0 0 22 24"><rect x="0.5" y="0.5" width="9" height="22.5" fill="url(#stg)"/><path d="M12 5H19M12 10H19M12 15H19" stroke="#c9d3dd" stroke-width="2.8"/><path d="M14 21 H21 L17.5 24Z" fill="#8d8d8d"/></svg>
<svg class="a" style="left:334px;top:342px" width="25" height="17" viewBox="0 0 25 17"><circle cx="8" cy="8" r="7" fill="none" stroke="#bccad8" stroke-width="1.6"/><circle cx="8" cy="8" r="3.5" fill="none" stroke="#bccad8" stroke-width="1.4"/><path d="M0 8H16M8 0V16" stroke="#bccad8" stroke-width="1.2"/><path d="M17 2.5H24M17 7.5H24M17 12.5H24" stroke="#c9d3dd" stroke-width="2.8"/></svg>
<svg class="a" style="left:3px;top:822px" width="26" height="23" viewBox="0 0 26 23"><path d="M1 1 H16 V4.5 H6.5 V16 H3 L1 14Z" fill="#c3cfdb"/><path d="M7 5.5 H22 V21 H9.5 L7 18.5Z" fill="#c3cfdb"/><path d="M10 8H19M10 10H19M10 12H19" stroke="#b0bfcf" stroke-width="0.8"/><rect x="11" y="16" width="7" height="4" fill="#f0f0f0"/></svg>
<svg class="a" style="left:34px;top:822px" width="24" height="23" viewBox="0 0 24 23"><g fill="none" stroke="#c3cfdb" stroke-width="1.8"><path d="M2 6.5 V1.5 H21.3 V21.3 H16"/><rect x="1.7" y="8.9" width="13" height="12.4"/></g><path d="M8.2 11.5V18.5M4.7 15H11.7" stroke="#c3cfdb" stroke-width="1.8"/></svg>
<svg class="a" style="left:65px;top:822px" width="24" height="23" viewBox="0 0 24 23"><g fill="none" stroke="#c3cfdb" stroke-width="1.8"><path d="M2 6.5 V1.5 H21.3 V21.3 H16"/><rect x="1.7" y="8.9" width="13" height="12.4"/></g><path d="M4.7 15H11.7" stroke="#c3cfdb" stroke-width="1.8"/></svg>
<svg class="a" style="left:279px;top:823px" width="26" height="21" viewBox="0 0 26 21"><rect x="1.6" y="3.6" width="22.7" height="15.8" fill="#5f7f9f" stroke="#1f4e80" stroke-width="1.2"/><rect x="3.2" y="1.2" width="5.8" height="2.6" fill="#1f4e80"/><circle cx="16.9" cy="11" r="5" fill="#1f4e80" stroke="#fff" stroke-width="1.3"/></svg>
<!--/VT-->
<div id="vp" class="a"></div>
<!--MODEL-->
<svg class="a" style="left:0;top:0" width="1409" height="865" viewBox="0 0 1409 865">
<defs>
<linearGradient id="or1" gradientUnits="userSpaceOnUse" x1="0" y1="612" x2="0" y2="776"><stop offset="0" stop-color="#f2aa22"/><stop offset="0.13" stop-color="#fdec5c"/><stop offset="0.25" stop-color="#fba822"/><stop offset="0.42" stop-color="#ff8c06"/><stop offset="0.55" stop-color="#f88606"/><stop offset="0.7" stop-color="#d87408"/><stop offset="0.88" stop-color="#8e5410"/><stop offset="1" stop-color="#683c0a"/></linearGradient>
<linearGradient id="or2" gradientUnits="userSpaceOnUse" x1="0" y1="561" x2="0" y2="726"><stop offset="0" stop-color="#f2aa22"/><stop offset="0.13" stop-color="#fdec5c"/><stop offset="0.25" stop-color="#fba822"/><stop offset="0.42" stop-color="#ff8c06"/><stop offset="0.55" stop-color="#f88606"/><stop offset="0.7" stop-color="#d87408"/><stop offset="0.88" stop-color="#8e5410"/><stop offset="1" stop-color="#683c0a"/></linearGradient>
<linearGradient id="bore1" gradientUnits="userSpaceOnUse" x1="1058" y1="641" x2="1066" y2="712"><stop offset="0" stop-color="#5a586e"/><stop offset="0.3" stop-color="#8c88aa"/><stop offset="0.58" stop-color="#c4c0e4"/><stop offset="0.65" stop-color="#ffffff"/><stop offset="0.72" stop-color="#bcb8de"/><stop offset="1" stop-color="#b4b0d6"/></linearGradient>
<linearGradient id="bore2" gradientUnits="userSpaceOnUse" x1="1274" y1="587" x2="1282" y2="659"><stop offset="0" stop-color="#5a586e"/><stop offset="0.3" stop-color="#8c88aa"/><stop offset="0.58" stop-color="#c4c0e4"/><stop offset="0.65" stop-color="#ffffff"/><stop offset="0.72" stop-color="#bcb8de"/><stop offset="1" stop-color="#b4b0d6"/></linearGradient>
<linearGradient id="ring1" gradientUnits="userSpaceOnUse" x1="0" y1="614" x2="0" y2="724"><stop offset="0" stop-color="#a6a2c6"/><stop offset="0.3" stop-color="#bcb8dc"/><stop offset="0.38" stop-color="#f6f4ff"/><stop offset="0.47" stop-color="#b8b4da"/><stop offset="0.75" stop-color="#9490b2"/><stop offset="1" stop-color="#56546a"/></linearGradient>
<linearGradient id="ring2" gradientUnits="userSpaceOnUse" x1="0" y1="565" x2="0" y2="668"><stop offset="0" stop-color="#a6a2c6"/><stop offset="0.3" stop-color="#bcb8dc"/><stop offset="0.38" stop-color="#f6f4ff"/><stop offset="0.47" stop-color="#b8b4da"/><stop offset="0.75" stop-color="#9490b2"/><stop offset="1" stop-color="#56546a"/></linearGradient>
<linearGradient id="barsh" gradientUnits="userSpaceOnUse" x1="0" y1="0" x2="0.2" y2="1"><stop offset="0" stop-color="#4c4a5c"/><stop offset="1" stop-color="#9d99ba"/></linearGradient>
<filter id="bl1" x="-5%" y="-20%" width="110%" height="140%"><feGaussianBlur stdDeviation="1.2"/></filter>
</defs>
<polygon fill="#4c4a5c" points="811.9,255.5 834.0,264.4 849.0,713.3 847.8,713.9 827.2,704.5"/>
<polygon fill="#928dae" points="832.8,264.4 1200.8,174.6 1206.3,333.0 1215.0,600.0 911.0,698.4 847.7,713.1"/>
<polygon fill="#9d99ba" points="811.9,255.5 1069.7,192.0 1153.0,172.6 1156.5,168.5 1066.8,127.3 1084.6,122.5 1200.8,174.6 1200.8,175.4 832.8,265.2"/>
<path fill="#4c4a5c" d="M1066.8,127.3 L1155,168 Q1159,171 1152,173 L1069.7,192 Z"/>
<path fill="#4c4a5c" stroke="#4c4a5c" stroke-width="0.6" d="M1091.1,211.9 L1142,234 L1321.8,563.2 C1323.8,569.4 1330.6,588.8 1333.9,600.5 C1337.2,612.2 1339.9,623.2 1341.6,633.5 C1343.2,643.8 1344.0,652.5 1343.8,662.0 C1343.6,671.5 1342.7,682.6 1340.5,690.6 C1338.3,698.6 1334.2,705.2 1330.6,710.3 C1326.9,715.4 1323.2,718.7 1318.6,721.3 C1314.0,723.9 1305.8,725.0 1303.2,725.7 L1290,723 L1133,654 L1106,642 L1103.5,560 Z"/>
<polygon fill="#9d99ba" points="1091.1,211.9 1101.0,209.8 1150.0,231.5 1142.0,234.0"/>
<polygon fill="#b7b2dc" points="1142.0,234.0 1150.0,231.5 1331.7,561.0 1321.8,563.2"/>
<path fill="url(#or2)" d="M1321.8,563.2 L1331.7,561 C1333.5,565.8 1339.4,579.6 1342.7,589.5 C1346.0,599.4 1349.5,610.0 1351.5,620.3 C1353.5,630.5 1354.6,641.1 1354.8,651.0 C1355.0,660.9 1354.2,671.2 1352.6,679.6 C1350.9,688.0 1348.4,695.3 1344.9,701.5 C1341.4,707.7 1336.5,713.3 1331.7,717.0 C1327.0,720.7 1321.2,722.0 1316.4,723.5 C1311.7,725.0 1305.4,725.3 1303.2,725.7 C1305.8,725.0 1314.0,723.9 1318.6,721.3 C1323.2,718.7 1326.9,715.4 1330.6,710.3 C1334.2,705.2 1338.3,698.6 1340.5,690.6 C1342.7,682.6 1343.6,671.5 1343.8,662.0 C1344.0,652.5 1343.2,643.8 1341.6,633.5 C1339.9,623.2 1337.2,612.2 1333.9,600.5 C1330.6,588.8 1323.8,569.4 1321.8,563.2 Z"/>
<path fill="url(#ring2)" d="M1266.2,566.6 C1267.8,566.6 1271.7,564.8 1276.0,566.5 C1280.3,568.2 1287.7,573.4 1292.0,577.0 C1296.3,580.6 1298.8,584.1 1302.0,588.0 C1305.2,591.9 1308.7,594.0 1310.9,600.5 C1313.1,607.0 1315.0,618.1 1315.3,626.9 C1315.6,635.7 1314.7,646.2 1313.0,653.2 C1311.3,660.2 1306.7,666.0 1305.4,668.6 C1306.0,665.7 1308.0,658.3 1308.7,651.0 C1309.4,643.7 1310.3,632.4 1309.8,624.7 C1309.2,617.0 1308.3,612.3 1305.4,605.0 C1302.5,597.7 1296.4,586.4 1292.2,580.7 C1288.0,575.0 1284.3,573.4 1280.0,571.0 C1275.7,568.6 1268.5,567.3 1266.2,566.6 Z"/>
<path fill="url(#bore2)" d="M1275.5,587.4 C1277.6,588.2 1284.4,588.2 1288.0,592.0 C1291.6,595.8 1294.8,603.7 1297.0,610.0 C1299.2,616.3 1300.5,624.3 1301.0,630.0 C1301.5,635.7 1300.9,639.7 1299.7,644.0 C1298.5,648.3 1296.1,653.5 1294.0,656.0 C1291.9,658.5 1290.0,659.2 1287.0,659.0 C1284.0,658.8 1279.7,658.2 1276.0,655.0 C1272.3,651.8 1267.8,646.5 1265.0,640.0 C1262.2,633.5 1259.8,623.6 1259.3,616.3 C1258.8,609.0 1259.3,600.8 1262.0,596.0 C1264.7,591.2 1273.2,588.8 1275.5,587.4 Z"/>
<path fill="#fff" d="M1287.0,594.3 C1288.3,595.9 1292.8,599.4 1295.0,604.0 C1297.2,608.6 1299.4,616.5 1300.4,622.0 C1301.4,627.5 1301.0,633.3 1300.9,637.0 C1300.8,640.7 1301.0,645.2 1299.7,644.0 C1298.4,642.8 1295.0,635.0 1293.0,630.0 C1291.0,625.0 1289.0,620.0 1288.0,614.0 C1287.0,608.0 1287.2,597.6 1287.0,594.3 Z"/>
<path fill="#4c4a5c" stroke="#4c4a5c" stroke-width="0.6" d="M882.9,263.5 L931.1,284.4 L1114.1,614.3 C1116.7,620.3 1126.0,639.0 1129.5,650.5 C1133.0,662.0 1133.9,674.3 1135.0,683.4 C1136.1,692.5 1136.2,697.2 1136.0,705.3 C1135.8,713.3 1135.7,723.7 1133.9,731.7 C1132.1,739.8 1128.8,747.2 1125.1,753.6 C1121.4,760.0 1117.1,766.3 1112.0,770.0 C1106.9,773.7 1097.3,774.7 1094.4,775.6 L1084.7,774.8 L915,699 L897.1,690.2 Z"/>
<polygon fill="#9d99ba" points="882.9,263.5 892.4,260.5 940.1,282.3 931.1,284.4"/>
<polygon fill="#b7b2dc" points="931.1,284.4 940.1,282.3 1124.0,612.0 1114.1,614.3"/>
<path fill="url(#or1)" d="M1114.1,614.3 L1124,612 C1125.5,615.5 1129.7,623.9 1132.8,632.9 C1135.9,641.9 1140.5,654.8 1142.7,665.8 C1144.9,676.8 1145.6,689.2 1146.0,698.7 C1146.4,708.2 1146.0,714.5 1144.9,722.9 C1143.8,731.3 1142.3,741.9 1139.4,749.2 C1136.5,756.5 1132.1,762.8 1127.3,766.8 C1122.5,770.8 1116.3,771.9 1110.8,773.4 C1105.3,774.9 1097.1,775.2 1094.4,775.6 C1097.3,774.7 1106.9,773.7 1112.0,770.0 C1117.1,766.3 1121.4,760.0 1125.1,753.6 C1128.8,747.2 1132.1,739.8 1133.9,731.7 C1135.7,723.7 1135.8,713.3 1136.0,705.3 C1136.2,697.2 1136.1,692.5 1135.0,683.4 C1133.9,674.3 1133.0,662.0 1129.5,650.5 C1126.0,639.0 1116.7,620.3 1114.1,614.3 Z"/>
<polygon fill="#9d99ba" points="851.3,593.7 879.8,587.3 894.1,588.8 900.9,585.8 1031.6,644.4 1031.6,653.4 879.8,606.8"/>
<polygon fill="#4c4a5c" points="851.3,593.7 879.8,606.8 897.0,612.0 897.0,623.5 879.8,619.6 851.3,606.0"/>
<path d="M902,586.5 L1031,645" stroke="#4c4a5c" stroke-width="1.6" filter="url(#bl1)" opacity="0.8"/>
<path d="M1031.6,653 V662" stroke="#9d99ba" stroke-width="1"/>
<path fill="url(#ring1)" d="M1053.8,616.3 C1055.9,615.9 1061.4,612.2 1066.6,614.0 C1071.8,615.8 1079.6,621.5 1085.0,627.0 C1090.4,632.5 1095.5,640.2 1099.0,647.0 C1102.5,653.8 1104.4,661.0 1106.0,668.0 C1107.6,675.0 1109.0,682.2 1108.7,689.2 C1108.4,696.2 1107.0,704.2 1104.0,710.0 C1101.0,715.8 1092.8,721.5 1090.6,723.8 C1091.5,721.5 1095.0,714.3 1096.0,710.0 C1097.0,705.7 1096.8,705.7 1096.7,698.2 C1096.6,690.7 1096.5,674.1 1095.2,665.2 C1093.9,656.3 1091.5,650.8 1089.0,645.0 C1086.5,639.2 1083.5,634.8 1080.0,630.6 C1076.5,626.4 1072.4,622.4 1068.0,620.0 C1063.6,617.6 1056.2,616.9 1053.8,616.3 Z"/>
<path fill="url(#bore1)" d="M1060.6,641.0 C1062.5,641.7 1068.8,641.8 1072.0,645.0 C1075.2,648.2 1078.0,654.2 1080.0,660.0 C1082.0,665.8 1083.6,674.2 1084.3,680.0 C1085.0,685.8 1085.0,690.3 1083.9,695.0 C1082.9,699.7 1080.2,705.2 1078.0,708.0 C1075.8,710.8 1074.0,712.0 1071.0,711.8 C1068.0,711.6 1063.7,710.3 1060.0,707.0 C1056.3,703.7 1051.8,699.0 1049.0,692.0 C1046.2,685.0 1043.6,672.3 1043.3,665.0 C1043.0,657.7 1044.1,652.0 1047.0,648.0 C1049.9,644.0 1058.3,642.2 1060.6,641.0 Z"/>
<path fill="#fff" d="M1071.8,647.9 C1073.0,649.2 1077.0,652.0 1079.0,656.0 C1081.0,660.0 1082.6,666.7 1083.5,672.0 C1084.4,677.3 1084.7,683.9 1084.6,688.0 C1084.5,692.1 1084.3,697.5 1083.0,696.7 C1081.7,695.9 1078.8,688.3 1077.0,683.0 C1075.2,677.7 1072.9,670.9 1072.0,665.0 C1071.1,659.1 1071.8,650.8 1071.8,647.9 Z"/>
</svg>
<!--/MODEL-->


<!--DLG-->
<div class="a" style="left:416px;top:189px;width:320px;height:510px;box-shadow:2px 5px 20px 2px rgba(0,0,0,0.28);left:426px;top:199px;width:300px;height:490px"></div>
<div class="a" style="left:426px;top:199px;width:300px;height:490px;background:#f0f0f0;border:1px solid #1883d7"></div>
<div class="a" style="left:427px;top:200px;width:298px;height:30px;background:#fff"></div>
<svg class="a" style="left:435px;top:208px" width="17" height="13"><use href="#i-press"/></svg>
<span class="t" style="left:456.4px;top:207.9px;font-size:11px;">Pressure</span>
<svg class="a" style="left:704px;top:208px" width="12" height="12"><path d="M1 1.5L11 11.5M11 1.5L1 11.5" stroke="#111" stroke-width="1.1"/></svg>
<div class="a" style="left:437px;top:241px;width:277px;height:13px;background:#fff"></div>
<span class="t" style="left:437.5px;top:241.0px;font-size:11px;">Pressure 1</span>
<div class="a" style="left:438px;top:274px;width:276px;height:270px;border:1px solid #dcdcdc"></div>
<div class="a" style="left:444px;top:270px;width:74px;height:12px;background:#f0f0f0"></div>
<span class="t" style="left:447px;top:268.0px;font-size:11px;">Apply to faces</span>
<div class="a" style="left:448px;top:291px;width:257px;height:192px;background:#fff;border:1px solid #828790"></div>
<div class="a" style="left:469px;top:292px;width:235px;height:40px;background:#cce8ff"></div>
<div class="a" style="left:471px;top:312px;width:232px;height:20px;border:1px dotted #000"></div>
<svg class="a" style="left:473px;top:295px" width="14" height="15"><path d="M1 0.3 L13 7.6 L13 13.6 L1 6.3Z" fill="#2d63a4"/></svg>
<svg class="a" style="left:473px;top:315px" width="14" height="15"><path d="M1 0.3 L13 7.6 L13 13.6 L1 6.3Z" fill="#2d63a4"/></svg>
<span class="t" style="left:494.4px;top:295.9px;font-size:11px;">Face 8, 1</span>
<span class="t" style="left:494.4px;top:315.7px;font-size:11px;">Face 21, 1</span>
<span class="t" style="left:447.3px;top:493.9px;font-size:11px;">Number of faces</span>
<div class="a" style="left:532px;top:488px;width:15px;height:24px;background:#f0f0f0;border:1px solid #e3e3e3;border-left-color:#a0a0a0;border-top-color:#a0a0a0"></div>
<span class="t" style="left:537px;top:493.9px;font-size:11px;">2</span>
<div class="a" style="left:630px;top:490px;width:73px;height:21px;background:#e1e1e1;border:1px solid #adadad"></div>
<span class="t" style="left:650px;top:493.9px;font-size:11px;">Delete</span>
<div class="a" style="left:520px;top:520px;width:13px;height:13px;background:#fff;border:1px solid #333"></div>
<span class="t" style="left:537.8px;top:519.7px;font-size:11px;">Add tangent faces</span>
<span class="t" style="left:437.5px;top:567.2px;font-size:11px;">Pressure units</span>
<div class="a" style="left:511px;top:563px;width:55px;height:20px;background:#e1e1e1;border:1px solid #adadad"></div>
<span class="t" style="left:516.2px;top:567.2px;font-size:11px;">[MPa]</span>
<svg class="a" style="left:551px;top:569px" width="10" height="7"><path d="M1 1.5L5 5.5L9 1.5" fill="none" stroke="#333" stroke-width="1"/></svg>
<span class="t" style="left:437.5px;top:589.2px;font-size:11px;">Pressure</span>
<div class="a" style="left:437px;top:607px;width:243px;height:21px;background:#fff;border:1px solid #7a7a7a"></div>
<span class="t" style="left:442px;top:612.2px;font-size:11px;">1</span>
<span class="t" style="left:685.8px;top:612.2px;font-size:11px;">[MPa]</span>
<div class="a" style="left:438px;top:635px;width:27px;height:22px;background:#e1e1e1;border:1px solid #adadad"></div>
<span class="t" style="left:445px;top:637px;font-size:17px;line-height:18px;font-weight:bold;color:#46698f">?</span>
<div class="a" style="left:559px;top:635px;width:73px;height:21px;background:#e1e1e1;border:1px solid #adadad"></div>
<span class="t" style="left:577px;top:638.7px;font-size:11px;">Cancel</span>
<div class="a" style="left:640px;top:635px;width:73px;height:21px;background:#e1e1e1;border:1px solid #adadad"></div>
<span class="t" style="left:668px;top:638.7px;font-size:11px;">OK</span>
<div class="a" style="left:437px;top:664px;width:277px;height:13px;background:#fff"></div>
<span class="t" style="left:437.5px;top:663.2px;font-size:11px;">Select faces</span>
<!--/DLG-->
</body></html>
